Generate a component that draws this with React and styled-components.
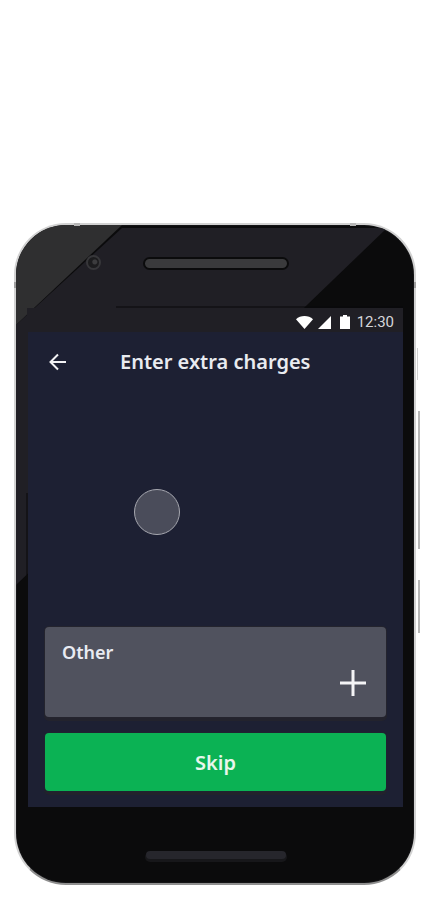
import React from 'react';
import styled, { createGlobalStyle } from 'styled-components';

const GlobalStyle = createGlobalStyle`
  html, body {
    margin: 0;
    padding: 0;
    background: #fff;
  }
  * {
    box-sizing: border-box;
  }
`;

const Page = styled.div`
  width: 434px;
  height: 903px;
  padding: 223px 0 0 14px;
  overflow: hidden;
`;

const Phone = styled.div`
  position: relative;
  width: 402px;
  height: 662px;
  padding: 32px 11px 0 12px;
  background: #0b0b0c;
  border: 2px solid #d2d2d2;
  border-bottom-color: #8f8f8f;
  border-radius: 52px;
  box-shadow: inset 0 0 0 1px #141416;
`;

const Facets = styled.svg`
  position: absolute;
  inset: 0;
  width: 398px;
  height: 658px;
  border-radius: 50px;
`;

const SideKey = styled.span`
  position: absolute;
  left: ${p => p.$left}px;
  top: ${p => p.$top}px;
  width: ${p => p.$w}px;
  height: ${p => p.$h}px;
  background: ${p => p.$color || '#b6b6b6'};
`;

const Speaker = styled.div`
  position: relative;
  width: 146px;
  height: 13px;
  margin-left: 115px;
  background: #3a3a3c;
  border: 2px solid #0b0b0c;
  border-radius: 7px;
`;

const Camera = styled.div`
  position: absolute;
  left: 70px;
  top: 30px;
  width: 15px;
  height: 15px;
  border: 2px solid #37373a;
  border-radius: 50%;
  background: radial-gradient(circle at 62% 45%, #3c3c3e 0 2px, #1c1c1e 3px);
`;

const Screen = styled.div`
  position: relative;
  width: 375px;
  height: 499px;
  margin-top: 38px;
  display: flex;
  flex-direction: column;
  background: #1d2033;
`;

const StatusBar = styled.div`
  height: 24px;
  padding: 4px 9px 0 0;
  display: flex;
  align-items: center;
  justify-content: flex-end;
  background: #201f25;
  box-shadow: -1px 0 0 #201f25;
`;

const StatusIcon = styled.svg`
  display: block;
  margin-right: ${p => p.$gap}px;
  fill: #fff;
`;

const Clock = styled.span`
  font: 400 15px/16px Roboto, sans-serif;
  color: #d6d6da;
`;

const NavBar = styled.div`
  height: 60px;
  padding: 0 0 0 21px;
  display: flex;
  align-items: center;
  gap: 53px;
`;

const BackIcon = styled.svg`
  display: block;
  fill: none;
  stroke: #f2f2f4;
  stroke-width: 2;
`;

const Title = styled.h1`
  margin: 0;
  font: 600 20px/24px "Noto Sans", sans-serif;
  color: #e9ebf0;
  white-space: nowrap;
`;

const Touch = styled.div`
  position: absolute;
  left: 106px;
  top: 181px;
  width: 46px;
  height: 46px;
  border-radius: 50%;
  background: #4a4c5a;
  border: 1.5px solid #a6a7af;
`;

const Content = styled.div`
  flex: 1;
  padding: 0 17px 16px;
  display: flex;
  flex-direction: column;
  justify-content: flex-end;
  gap: 16px;
`;

const ChargeCard = styled.div`
  height: 90px;
  padding: 14px 20px 21px 17px;
  display: flex;
  flex-direction: column;
  justify-content: space-between;
  background: #50525e;
  border-radius: 4px;
  box-shadow: 0 0 0 1px #24242e, 0 3px 0 1px #23232d;
`;

const ChargeLabel = styled.span`
  font: 600 18px/22px "Noto Sans", sans-serif;
  color: #e9ebf3;
`;

const PlusIcon = styled.svg`
  display: block;
  align-self: flex-end;
  stroke: #f4f4f6;
  stroke-width: 3;
`;

const SkipButton = styled.button`
  height: 58px;
  padding: 2px 0 0;
  border: 0;
  border-radius: 4px;
  background: #0bb254;
  box-shadow: 0 0 0 1px #1f2330, 0 3px 0 1px #22222c;
  font: 600 20px/24px "Noto Sans", sans-serif;
  color: #e8f6ec;
`;

const HomeBar = styled.div`
  width: 140px;
  height: 8px;
  margin: 44px 0 0 118px;
  background: #26262c;
  border-radius: 4px;
  box-shadow: 0 2px 0 1px #17171a;
`;

const App = () => (
  <Page>
    <GlobalStyle />
    <Phone>
      <Facets viewBox="0 0 398 658">
        <path d="M0 0H106L0 100Z" fill="#2f2f30" />
        <path d="M106 3H371L0 360V100Z" fill="#201f25" />
        <path d="M100 82H387M11 268V350" stroke="#09090a" strokeWidth="1" />
      </Facets>
      <SideKey $left={58} $top={-2} $w={6} $h={3} />
      <SideKey $left={334} $top={-2} $w={6} $h={3} />
      <SideKey $left={-2} $top={57} $w={2} $h={6} $color="#a0a0a0" />
      <SideKey $left={398} $top={57} $w={2} $h={6} $color="#a0a0a0" />
      <SideKey $left={402} $top={186} $w={2} $h={138} />
      <SideKey $left={402} $top={355} $w={2} $h={53} />
      <SideKey $left={401} $top={123} $w={1} $h={32} $color="#d0d0d0" />
      <Camera />
      <Speaker />
      <Screen>
        <StatusBar>
          <StatusIcon $gap={5} width="17" height="13" viewBox="0 0 17 13">
            <path d="M0 3.2C2.3 1.2 5.2 0 8.5 0S14.700 1.200 17 3.200L8.500 13Z" />
          </StatusIcon>
          <StatusIcon $gap={9} width="13" height="13" viewBox="0 0 13 13">
            <path d="M13 0V13H0Z" />
          </StatusIcon>
          <StatusIcon $gap={7} width="10" height="14" viewBox="0 0 10 14">
            <path d="M3 0H7V1.500H10V14H0V1.500H3Z" />
          </StatusIcon>
          <Clock>12:30</Clock>
        </StatusBar>
        <NavBar>
          <BackIcon width="18" height="18" viewBox="0 0 18 18">
            <path d="M17 9H2M9 1.500L1.500 9L9 16.500" />
          </BackIcon>
          <Title>Enter extra charges</Title>
        </NavBar>
        <Touch />
        <Content>
          <ChargeCard>
            <ChargeLabel>Other</ChargeLabel>
            <PlusIcon width="26" height="26" viewBox="0 0 26 26">
              <path d="M13 0V26M0 13H26" />
            </PlusIcon>
          </ChargeCard>
          <SkipButton>Skip</SkipButton>
        </Content>
      </Screen>
      <HomeBar />
    </Phone>
  </Page>
);

export default App;
